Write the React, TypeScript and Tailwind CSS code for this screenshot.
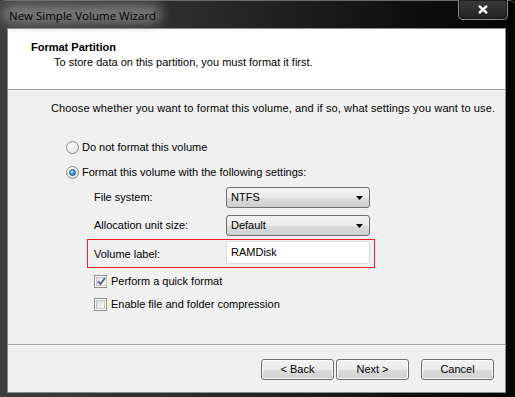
import React from "react";

const font = "font-['Liberation_Sans',Arial,sans-serif]";

const Radio = ({ checked }: { checked?: boolean }) => (
  <span className="relative w-[13px] h-[13px] rounded-full border border-[#8a8a8a] bg-[radial-gradient(circle_at_35%_35%,#ffffff,#dcdcdc)] flex items-center justify-center shrink-0">
    {checked && (
      <span className="w-[7px] h-[7px] rounded-full border border-[#1c4f87] bg-[radial-gradient(circle_at_40%_35%,#b8e2fb,#2a7ac4_70%,#184f8f)]" />
    )}
  </span>
);

const Checkbox = ({ checked }: { checked?: boolean }) => (
  <span className="w-[13px] h-[13px] border border-[#8f8f8f] bg-white p-[1px] shrink-0 flex">
    <span className="flex-1 border border-[#c6c6c6] bg-[linear-gradient(135deg,#dcdcdc,#fbfbfb)] flex items-center justify-center">
      {checked && (
        <svg width="9" height="9" viewBox="0 0 9 9">
          <path d="M1 4.5 L3.5 7 L8 1" fill="none" stroke="#4a5f97" strokeWidth="1.8" />
        </svg>
      )}
    </span>
  </span>
);

const Combo = ({ value }: { value: string }) => (
  <div className="w-[144px] h-[21px] rounded-[3px] border border-[#707070] bg-[linear-gradient(#f2f2f2,#ebebeb_50%,#dddddd_50%,#cfcfcf)] flex items-center pl-[4px] pr-[6px] text-[11px] text-black">
    <span className="flex-1">{value}</span>
    <svg width="7" height="4" viewBox="0 0 7 4">
      <path d="M0 0 H7 L3.5 4 Z" fill="#000" />
    </svg>
  </div>
);

const Button = ({ label }: { label: string }) => (
  <button className="w-[73px] h-[21px] rounded-[3px] border border-[#707070] bg-[linear-gradient(#f2f2f2,#ebebeb_50%,#dddddd_50%,#cfcfcf)] shadow-[inset_0_0_0_1px_#fcfcfc] text-[11px] text-black flex items-center justify-center">
    {label}
  </button>
);

export default function App() {
  return (
    <div className={`w-[515px] h-[397px] flex flex-col bg-[linear-gradient(90deg,#3e3e3e,#2a2a2a_40%,#0e0e0e_80%,#050505)] ${font}`}>
      {/* title bar */}
      <div className="relative h-[28px] shrink-0 border-t border-[#6a6a6a] rounded-t-[6px]">
        <div className="absolute left-[2px] top-[3px] w-[160px] h-[20px] rounded-full bg-[#8e8e8e]/75 blur-[6px]" />
        <span className="absolute left-[9px] top-[6px] text-[11.5px] text-black font-['Open_Sans',sans-serif]">
          New Simple Volume Wizard
        </span>
        <div className="absolute right-[7px] top-[-1px] w-[50px] h-[20px] rounded-b-[5px] border border-t-0 border-[#8a8a8a] bg-[linear-gradient(#3a3a3a,#222222)] shadow-[inset_0_0_0_1px_#1a1a1a] flex items-center justify-center">
          <svg width="10" height="9" viewBox="0 0 10 9">
            <path d="M1 0.8 L9 8.2 M9 0.8 L1 8.2" stroke="#ffffff" strokeWidth="2.4" />
          </svg>
        </div>
      </div>

      {/* client */}
      <div className="ml-[7px] w-[499px] h-[365px] border border-[#8c8c8c] flex flex-col bg-[#f0f0f0] text-[11px] text-black">
        <div className="h-[61px] bg-white border-b border-[#a0a0a0] shrink-0 pt-[12px] flex flex-col">
          <span className="pl-[23px] font-bold leading-[13px]">Format Partition</span>
          <span className="pl-[46px] leading-[13px] mt-[2px]">To store data on this partition, you must format it first.</span>
        </div>

        <div className="flex-1 flex flex-col">
          <span className="pl-[43px] mt-[12px] leading-[13px] tracking-[0.12px]">
            Choose whether you want to format this volume, and if so, what settings you want to use.
          </span>
          <div className="pl-[58px] mt-[25px] h-[14px] flex items-center gap-[3px]">
            <Radio />
            <span>Do not format this volume</span>
          </div>
          <div className="pl-[58px] mt-[11px] h-[14px] flex items-center gap-[3px]">
            <Radio checked />
            <span>Format this volume with the following settings:</span>
          </div>
          <div className="pl-[86px] mt-[8px] flex items-center">
            <span className="w-[132px]">File system:</span>
            <Combo value="NTFS" />
          </div>
          <div className="pl-[86px] mt-[7px] flex items-center">
            <span className="w-[132px]">Allocation unit size:</span>
            <Combo value="Default" />
          </div>
          <div className="ml-[79px] mt-[3px] w-[288px] h-[29px] border border-solid border-t-[#ee1c24] border-l-[#ee1c24] border-r-[#ee1c24] border-b-[#ee1c24] flex items-start">
            <span className="pl-[6px] w-[138px] mt-[6px]">Volume label:</span>
            <div className="mt-[1px] w-[144px] h-[23px] border border-[#dadada] rounded-[2px] bg-white flex items-center pl-[4px]">
              RAMDisk
            </div>
          </div>
          <div className="pl-[86px] mt-[7px] h-[13px] flex items-center gap-[4px]">
            <Checkbox checked />
            <span>Perform a quick format</span>
          </div>
          <div className="pl-[86px] mt-[10px] h-[13px] flex items-center gap-[4px]">
            <Checkbox />
            <span>Enable file and folder compression</span>
          </div>
        </div>

        <div className="h-[48px] shrink-0 border-t border-[#a0a0a0] shadow-[inset_0_1px_0_#ffffff] flex items-start justify-end pt-[14px] pr-[11px]">
          <Button label="< Back" />
          <span className="w-[2px]" />
          <Button label="Next >" />
          <span className="w-[12px]" />
          <Button label="Cancel" />
        </div>
      </div>
    </div>
  );
}
